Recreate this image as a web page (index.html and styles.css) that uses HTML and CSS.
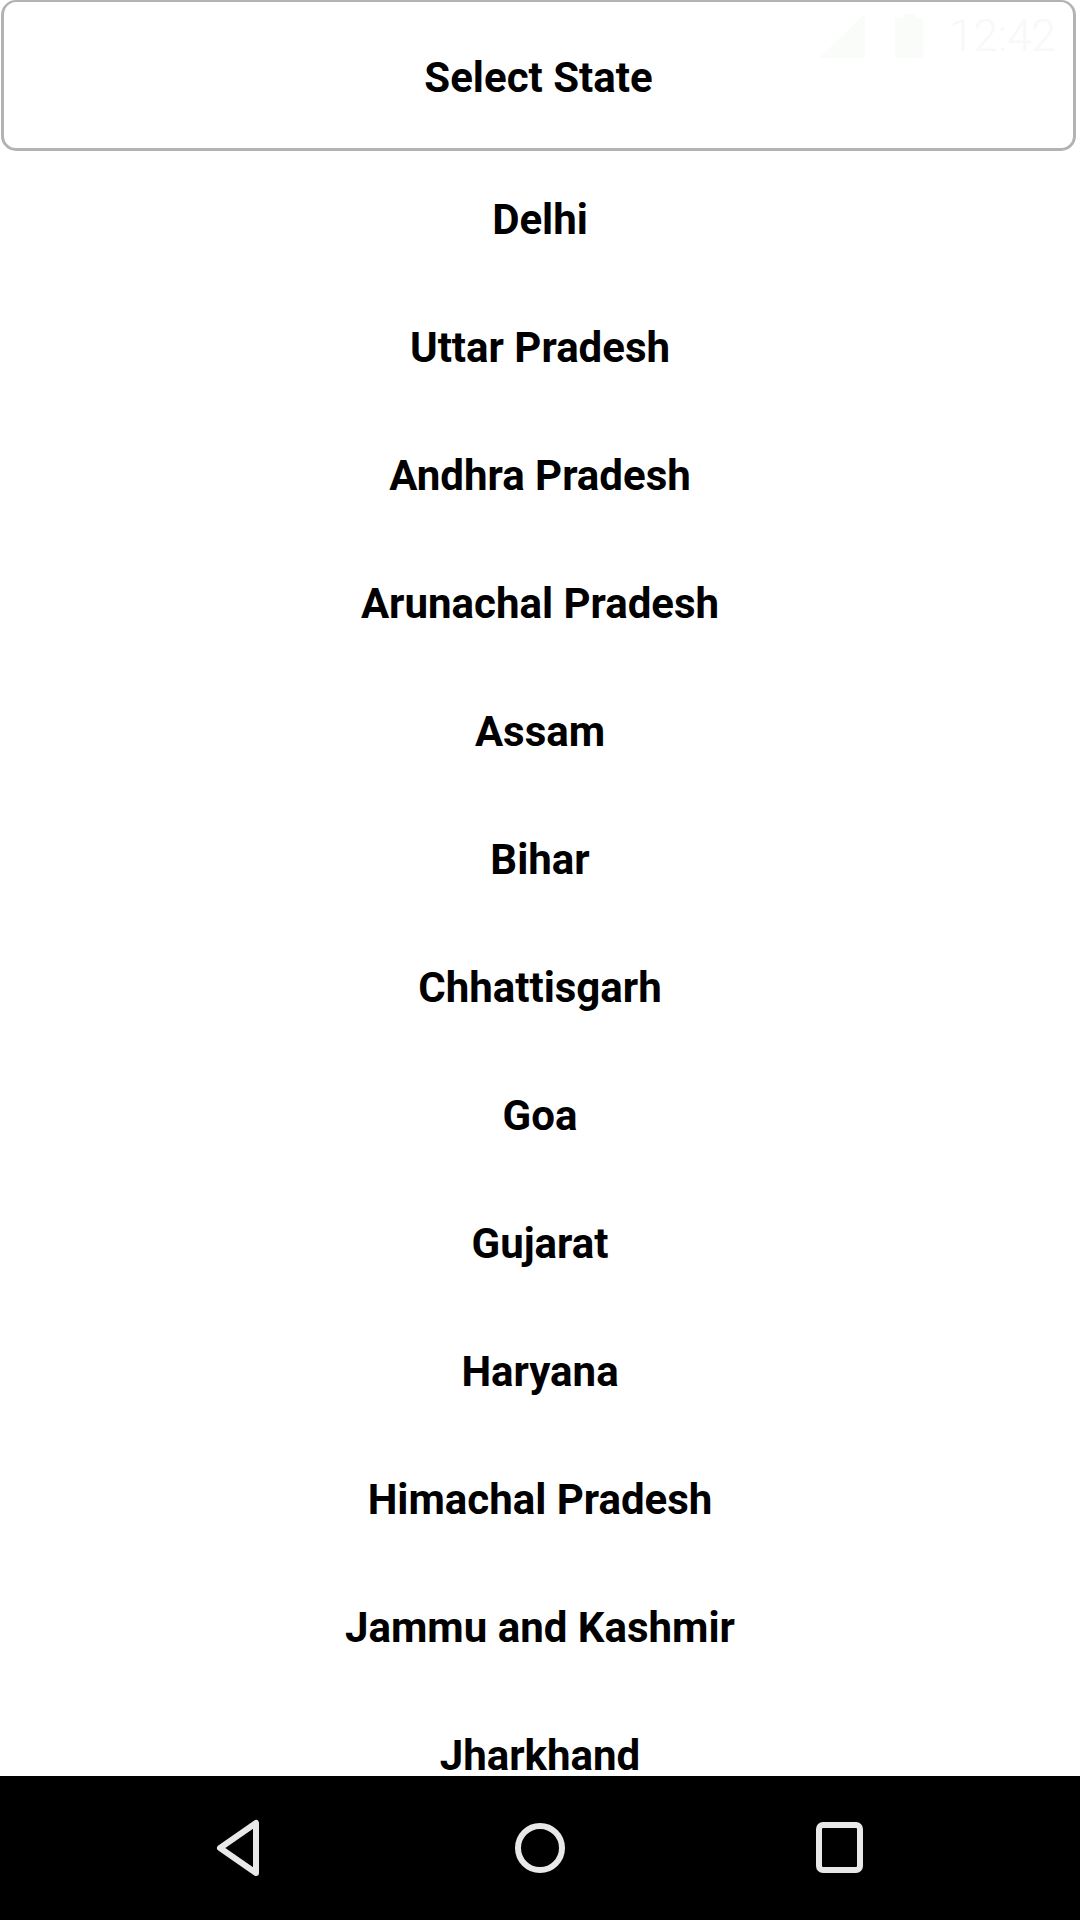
FILE: index.html
```html
<!DOCTYPE html>
<html>
<head>
<meta charset="utf-8">
<link rel="stylesheet" href="styles.css">
</head>
<body>
<div class="screen">
  <div class="status">
    <svg class="sig" width="50" height="44" viewBox="0 0 50 44"><path d="M46 0 L46 44 L0 44 Z" fill="#f9fcf9"/></svg>
    <svg class="bat" width="28" height="44" viewBox="0 0 28 44"><rect x="8" y="0" width="12" height="4" fill="#f9fcf9"/><rect x="0" y="4" width="28" height="40" fill="#f9fcf9"/></svg>
    <span class="time">12:42</span>
  </div>
  <div class="header">Select State</div>
  <div class="list">
    <div class="item">Delhi</div>
    <div class="item">Uttar Pradesh</div>
    <div class="item">Andhra Pradesh</div>
    <div class="item">Arunachal Pradesh</div>
    <div class="item">Assam</div>
    <div class="item">Bihar</div>
    <div class="item">Chhattisgarh</div>
    <div class="item">Goa</div>
    <div class="item">Gujarat</div>
    <div class="item">Haryana</div>
    <div class="item">Himachal Pradesh</div>
    <div class="item">Jammu and Kashmir</div>
    <div class="item">Jharkhand</div>
  </div>
  <div class="navbar">
    <svg width="60" height="64" viewBox="0 0 60 64"><path d="M46 7 L46 57 L10 32 Z" fill="none" stroke="#e8e8e8" stroke-width="6" stroke-linejoin="round"/></svg>
    <svg width="60" height="64" viewBox="0 0 60 64"><circle cx="30" cy="32" r="22" fill="none" stroke="#e8e8e8" stroke-width="6"/></svg>
    <svg width="60" height="64" viewBox="0 0 60 64"><rect x="9" y="9" width="41" height="45" rx="4" fill="none" stroke="#e8e8e8" stroke-width="6"/></svg>
  </div>
</div>
</body>
</html>
```
FILE: styles.css
```css
html, body {
  margin: 0;
  padding: 0;
  background: #ffffff;
}
.screen {
  position: relative;
  width: 1080px;
  height: 1920px;
  display: flex;
  flex-direction: column;
  overflow: hidden;
  font-family: Roboto, "Liberation Sans", sans-serif;
  font-weight: 700;
  color: #000;
}
.status {
  position: absolute;
  top: 14px;
  right: 24px;
  display: flex;
  align-items: flex-end;
  gap: 26px;
  z-index: 2;
}
.time {
  font-family: Roboto, sans-serif;
  font-weight: 300;
  font-size: 44px;
  line-height: 44px;
  color: #f8f8f8;
}
.header {
  margin: 0 4px 0 1px;
  height: 142px;
  padding-top: 4px;
  box-sizing: content-box;
  border: 3px solid #b3b3b3;
  border-top-width: 2px;
  border-radius: 15px;
  display: flex;
  align-items: center;
  justify-content: center;
  font-size: 42px;
  flex-shrink: 0;
}
.list {
  flex: 1;
  overflow: hidden;
  padding-top: 4px;
}
.item {
  height: 128px;
  display: flex;
  align-items: center;
  justify-content: center;
  font-size: 42px;
}
.navbar {
  height: 144px;
  flex-shrink: 0;
  background: #000;
  display: flex;
  align-items: center;
  justify-content: center;
  gap: 240px;
}
```
